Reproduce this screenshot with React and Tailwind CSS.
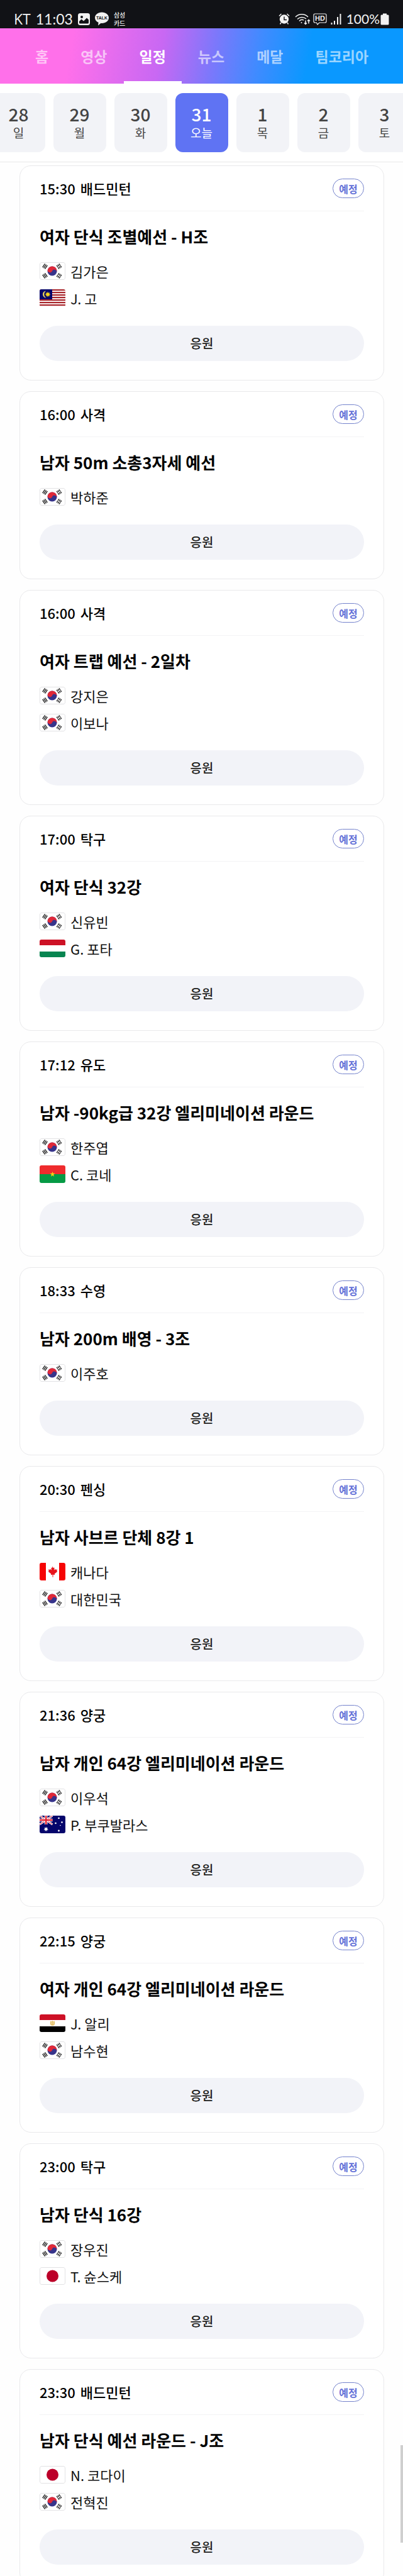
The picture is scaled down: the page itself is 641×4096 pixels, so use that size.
import React, { useState } from 'react';

const tabs = ['홈', '영상', '일정', '뉴스', '메달', '팀코리아'];

const days = [
  { date: 28, label: '일' },
  { date: 29, label: '월' },
  { date: 30, label: '화' },
  { date: 31, label: '오늘' },
  { date: 1, label: '목' },
  { date: 2, label: '금' },
  { date: 3, label: '토' },
];

const matches = [
  { time: '15:30', sport: '배드민턴', title: '여자 단식 조별예선 - H조', players: [['KR', '김가은'], ['MY', 'J. 고']] },
  { time: '16:00', sport: '사격', title: '남자 50m 소총3자세 예선', players: [['KR', '박하준']] },
  { time: '16:00', sport: '사격', title: '여자 트랩 예선 - 2일차', players: [['KR', '강지은'], ['KR', '이보나']] },
  { time: '17:00', sport: '탁구', title: '여자 단식 32강', players: [['KR', '신유빈'], ['HU', 'G. 포타']] },
  { time: '17:12', sport: '유도', title: '남자 -90kg급 32강 엘리미네이션 라운드', players: [['KR', '한주엽'], ['BF', 'C. 코네']] },
  { time: '18:33', sport: '수영', title: '남자 200m 배영 - 3조', players: [['KR', '이주호']] },
  { time: '20:30', sport: '펜싱', title: '남자 사브르 단체 8강 1', players: [['CA', '캐나다'], ['KR', '대한민국']] },
  { time: '21:36', sport: '양궁', title: '남자 개인 64강 엘리미네이션 라운드', players: [['KR', '이우석'], ['AU', 'P. 부쿠발라스']] },
  { time: '22:15', sport: '양궁', title: '여자 개인 64강 엘리미네이션 라운드', players: [['EG', 'J. 알리'], ['KR', '남수현']] },
  { time: '23:00', sport: '탁구', title: '남자 단식 16강', players: [['KR', '장우진'], ['JP', 'T. 슌스케']] },
  { time: '23:30', sport: '배드민턴', title: '남자 단식 예선 라운드 - J조', players: [['JP', 'N. 코다이'], ['KR', '전혁진']] },
];

// Three short bars of a trigram, the broken ones get a white gap in the middle
function Trigram({ x, y, angle, broken }) {
  return (
    <g transform={`translate(${x} ${y}) rotate(${angle})`}>
      <path d="M-3.5 -2.3h7M-3.5 0h7M-3.5 2.3h7" stroke="#222" strokeWidth="1.4" />
      {broken && <path d="M0 -3.2v6.4" stroke="#fff" strokeWidth="0.8" />}
    </g>
  );
}

const flagArt = {
  KR: (
    <>
      <rect width="41" height="28" fill="#fff" />
      <circle cx="20" cy="14" r="7.5" fill="#37348b" />
      <path
        d="M12.5 14A7.5 7.5 0 0 1 27.5 14A3.75 3.75 0 0 0 20 14A3.75 3.75 0 0 1 12.5 14Z"
        fill="#e02838"
        transform="rotate(22 20 14)"
      />
      <Trigram x={8.5} y={6.5} angle={-56} />
      <Trigram x={31} y={6.5} angle={56} broken />
      <Trigram x={8.5} y={21.5} angle={56} />
      <Trigram x={31} y={21.5} angle={-56} broken />
    </>
  ),
  MY: (
    <>
      <rect width="41" height="28" fill="#fff" />
      {[0, 4, 8, 12, 16, 20, 24].map((y) => (
        <rect key={y} y={y} width="41" height="2.2" fill="#a8262c" />
      ))}
      <rect width="20" height="16" fill="#06066a" />
      <path d="M10.5 2.5A5.5 5.5 0 1 0 10.5 13.5A6.3 6.3 0 0 1 10.5 2.5Z" fill="#f3dc5a" />
      <path d="M13 3.5l.9 2.4 2.3-1-1 2.2 2.3.9-2.3.9 1 2.3-2.3-1-.9 2.3-.9-2.3-2.3 1 1-2.3-2.3-.9 2.3-.9-1-2.2 2.3 1z" fill="#f7d417" />
    </>
  ),
  HU: (
    <>
      <rect width="41" height="28" fill="#fff" />
      <rect width="41" height="9" fill="#cd1226" />
      <rect y="19" width="41" height="9" fill="#078550" />
    </>
  ),
  BF: (
    <>
      <rect width="41" height="14" fill="#ef2b2d" />
      <rect y="14" width="41" height="14" fill="#069a45" />
      <path d="M20.5 9.8l1 3h3.1l-2.5 1.9.9 3-2.5-1.8-2.5 1.8.9-3-2.5-1.900h3.100z" fill="#fcd116" />
    </>
  ),
  CA: (
    <>
      <rect width="41" height="28" fill="#fff" />
      <rect width="10" height="28" fill="#f60404" />
      <rect x="31" width="10" height="28" fill="#f60404" />
      <path d="M20.5 5.5l1.5 2.8 1.7-.9-.7 4.300 2-2 .6 1.300 2.500-.4-.8 2.500 1 .8-4.600 3.600.5 1.700-2.700-.5v4h-1v-4l-2.700.5.5-1.700-4.600-3.600 1-.8-.8-2.500 2.500.4.6-1.300 2 2-.7-4.300 1.700.9z" fill="#e8141c" />
    </>
  ),
  AU: (
    <>
      <rect width="41" height="28" fill="#05056b" />
      <path d="M0 0l20.5 14M20.5 0L0 14" stroke="#fff" strokeWidth="3" />
      <path d="M0 0l20.5 14M20.5 0L0 14" stroke="#e02030" strokeWidth="1" />
      <path d="M10.2 0v14M0 7h20.5" stroke="#fff" strokeWidth="4.5" />
      <path d="M10.2 0v14M0 7h20.5" stroke="#e02030" strokeWidth="2.5" />
      <path d="M10.2 17.5l.8 2.300 2.200-.7-1.200 2 2 1.400-2.500.3.200 2.500-1.500-2-1.500 2 .2-2.500-2.500-.3 2-1.400-1.200-2 2.200.7z" fill="#fff" />
      <g fill="#fff">
        <circle cx="30.5" cy="4" r="1.3" />
        <circle cx="25.5" cy="12" r="1.3" />
        <circle cx="35.5" cy="10.5" r="1.3" />
        <circle cx="33" cy="15.5" r="0.8" />
        <circle cx="30.5" cy="24" r="1.4" />
      </g>
    </>
  ),
  EG: (
    <>
      <rect width="41" height="28" fill="#fff" />
      <rect width="41" height="9" fill="#ce1126" />
      <rect y="19" width="41" height="9" fill="#000" />
      <path d="M17 10.5l2 1 1.5-1.5 1.5 1.5 2-1v5.5l-1.5 1v.8h-4v-.8l-1.5-1z" fill="#e3bd62" />
      <path d="M19.2 12v4M21.8 12v4" stroke="#fff" strokeWidth="0.6" />
    </>
  ),
  JP: (
    <>
      <rect width="41" height="28" fill="#fff" />
      <circle cx="20.5" cy="14" r="9.5" fill="#bc0029" />
    </>
  ),
};

// Flags with a white field need an outline on the white card
const outlined = ['KR', 'JP'];

function Flag({ code }) {
  return (
    <svg viewBox="0 0 41 28" className="h-7 w-[41px] shrink-0 rounded-[3px]" aria-hidden="true">
      {flagArt[code]}
      {outlined.includes(code) && (
        <rect x="0.5" y="0.5" width="40" height="27" rx="2.5" fill="none" stroke="#e2e2e4" />
      )}
    </svg>
  );
}

function StatusBar() {
  return (
    <div className="flex h-[45px] shrink-0 items-end justify-between bg-[#111216] px-[22px] pb-[3px] text-[#f2f2f2]">
      <div className="flex h-6 items-center">
        <span className="font-['Open_Sans'] text-[23px] leading-6">KT</span>
        <span className="ml-2 font-[Lato] text-[23px] leading-6">11:03</span>
        <svg viewBox="0 0 19 19" className="ml-2 size-[19px]" aria-hidden="true">
          <rect width="19" height="19" rx="3.5" fill="#f2f2f2" />
          <circle cx="6" cy="6" r="2" fill="#111216" />
          <path d="M2 15v-2l3.5-3.5 3.5 3 5-5 3 3V15q0 1.5-1.5 1.5h-12Q2 16.5 2 15z" fill="#111216" />
        </svg>
        <svg viewBox="0 0 22 22" className="ml-2 size-[22px]" aria-hidden="true">
          <path d="M11 .5c6 0 11 3.8 11 8.7s-5 8.7-11 8.7l-1.5-.1L5 21.5l.6-4.700C2.200 15.300 0 12.500 0 9.200 0 4.300 5 .5 11 .5z" fill="#f2f2f2" />
          <text x="11" y="12" textAnchor="middle" fontFamily="Liberation Sans" fontWeight="700" fontSize="7" fill="#111216">TALK</text>
        </svg>
        <span className="ml-2 text-[10px] leading-[13px] font-medium">삼성<br />카드</span>
      </div>
      <div className="flex h-6 items-center">
        <svg viewBox="0 0 18 18" className="size-[18px]" aria-hidden="true">
          <circle cx="9" cy="9.5" r="7.2" fill="#f2f2f2" />
          <path d="M1 4.5L4.5 1M17 4.5L13.5 1M4 15l-1.5 2.5M14 15l1.5 2.5" stroke="#f2f2f2" strokeWidth="1.5" />
          <path d="M9 5.5v5h4" stroke="#111216" strokeWidth="1.4" fill="none" />
        </svg>
        <svg viewBox="0 0 25 19" className="ml-2 h-[19px] w-[25px]" fill="none" stroke="#f2f2f2" strokeWidth="1.5" aria-hidden="true">
          <path d="M1 6a14 14 0 0 1 20 0M4 9.500a10 10 0 0 1 14-.5M7 12.500a6 6 0 0 1 7-1.500" />
          <circle cx="10.5" cy="15" r="1" fill="#f2f2f2" stroke="none" />
          <path d="M17 11.5v6M15 15.5l2 2 2-2M22 16.5v-6M20 12.5l2-2 2 2" />
        </svg>
        <svg viewBox="0 0 22 19" className="ml-1 h-[19px] w-[22px]" aria-hidden="true">
          <path d="M3 1h16q2 0 2 2v10q0 2-2 2h-9l-3 3-1.5-3H3q-2 0-2-2V3q0-2 2-2z" fill="none" stroke="#f2f2f2" strokeWidth="1.2" />
          <text x="11" y="12" textAnchor="middle" fontFamily="Liberation Sans" fontWeight="700" fontSize="11" fill="#f2f2f2">HD</text>
        </svg>
        <svg viewBox="0 0 17 18" className="ml-1.5 h-[18px] w-[17px]" stroke="#f2f2f2" strokeWidth="2" aria-hidden="true">
          <path d="M1.5 18v-3M6 18v-6M11 18V6M15.5 18V1" />
        </svg>
        <span className="ml-2 font-[Lato] text-[21px] leading-6">100%</span>
        <svg viewBox="0 0 14 19" className="ml-px h-[19px] w-3.5" aria-hidden="true">
          <path d="M4 .5h6v2h2q1.5 0 1.5 1.5v13q0 1.5-1.5 1.5H2Q.5 18.5.5 17V4Q.5 2.5 2 2.5h2z" fill="#f2f2f2" />
        </svg>
      </div>
    </div>
  );
}

function MatchCard({ match }) {
  return (
    <article className="shrink-0 rounded-[18px] border border-[#e9e9eb] bg-white px-[31px] pt-5 pb-[30px]">
      <div className="flex items-center justify-between border-b border-[#f3f3f5] pb-5">
        <p className="flex gap-2 text-[22px] leading-[31px] font-medium text-black">
          <time>{match.time}</time>
          <span>{match.sport}</span>
        </p>
        <span className="flex h-[31px] w-[50px] items-center justify-center rounded-full border border-[#7583cc] text-base leading-none font-bold text-[#6472d8]">
          예정
        </span>
      </div>
      <h2 className="mt-[22px] text-[26px] leading-9 font-bold text-black">{match.title}</h2>
      <ul className="mt-[23px] flex flex-col gap-[15px]">
        {match.players.map(([code, name]) => (
          <li key={name} className="flex h-7 items-center gap-2 text-[22px] leading-7 text-[#111]">
            <Flag code={code} />
            {name}
          </li>
        ))}
      </ul>
      <button type="button" className="mt-[30px] h-14 w-full rounded-full bg-[#f2f3f8] text-xl font-medium text-[#1e1e20]">
        응원
      </button>
    </article>
  );
}

function App() {
  const [activeTab, setActiveTab] = useState('일정');
  const [activeDate, setActiveDate] = useState(31);

  return (
    <div className="relative flex h-screen flex-col bg-[#fefefe] font-['Noto_Sans_CJK_KR',sans-serif]">
      <StatusBar />

      {/* Section tabs */}
      <nav className="flex h-[88px] shrink-0 gap-px bg-[linear-gradient(100deg,#ff70ea_18%,#c868f3_40%,#7b78fb_53%,#3f8bff_64%,#0a98ff_76%)] pl-[31px]">
        {tabs.map((tab) => (
          <a
            key={tab}
            href="#"
            onClick={() => setActiveTab(tab)}
            className={`flex items-center border-b-4 px-[25px] pt-1 text-[23px] font-bold ${
              tab === activeTab ? 'border-white text-white' : 'border-transparent text-white/60'
            }`}
          >
            {tab}
          </a>
        ))}
      </nav>

      {/* Date picker */}
      <div className="flex shrink-0 justify-center gap-[13px] overflow-hidden border-b border-[#e8e8e8] bg-white py-[15px]">
        {days.map((day) => (
          <button
            key={day.date}
            type="button"
            onClick={() => setActiveDate(day.date)}
            className={`flex h-[94px] w-[84px] shrink-0 flex-col items-center justify-center rounded-xl ${
              day.date === activeDate ? 'bg-[#5f73f3] text-white' : 'bg-[#f2f3f7] text-[#444]'
            }`}
          >
            <span className="text-[28px] leading-8 font-medium">{day.date}</span>
            <span className="text-[19px] leading-7">{day.label}</span>
          </button>
        ))}
      </div>

      {/* Schedule */}
      <main className="flex min-h-0 flex-1 flex-col gap-[17px] overflow-y-auto pt-[5px] pr-[30px] pl-[31px] [scrollbar-width:none]">
        {matches.map((match) => (
          <MatchCard key={match.time + match.title} match={match} />
        ))}
      </main>

      {/* Scroll thumb */}
      <div className="absolute right-0 bottom-[53px] h-[155px] w-1 bg-[#cfcfcf]" />
    </div>
  );
}

export default App;
